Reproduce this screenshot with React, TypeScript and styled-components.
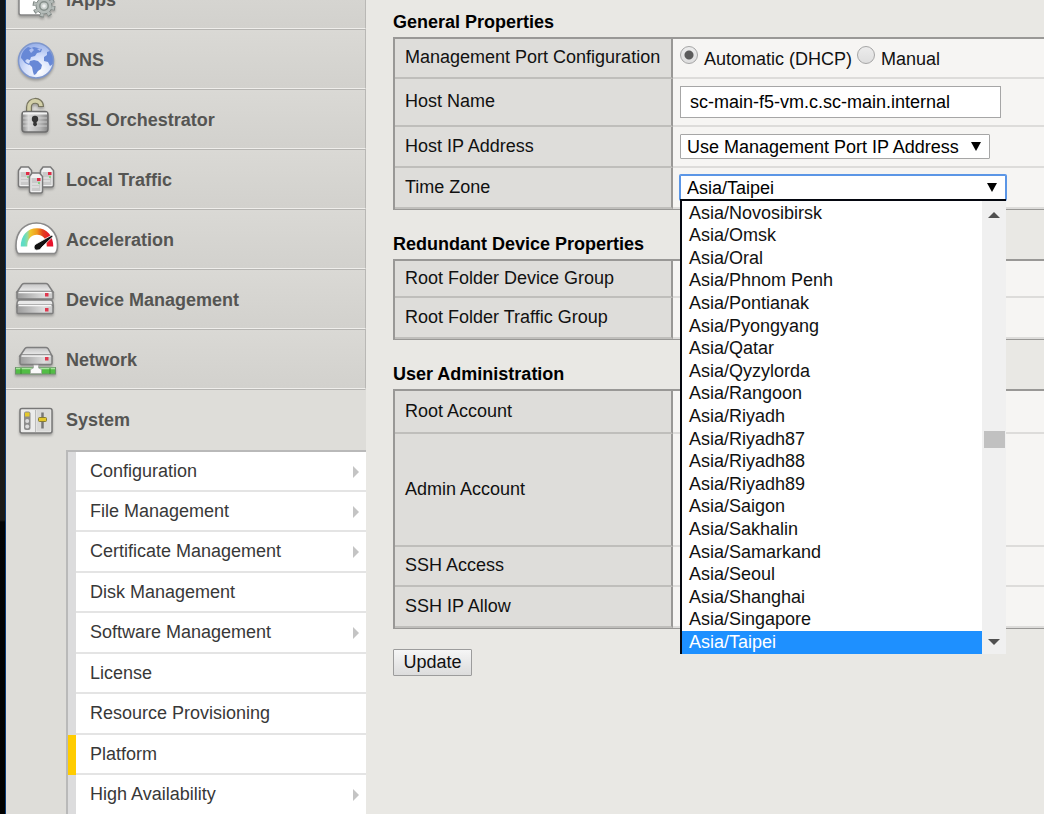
import React from "react";
import styled, { createGlobalStyle } from "styled-components";

const GlobalStyle = createGlobalStyle`
  * { box-sizing: border-box; }
  body {
    margin: 0;
    background: #e9e8e4;
    font-family: "Liberation Sans", Arial, sans-serif;
    font-size: 18px;
    line-height: 22px;
    color: #111;
  }
`;

const Shell = styled.div`
  display: flex;
  height: 100vh;
  overflow: hidden;
`;

const DesktopEdge = styled.div`
  flex: none;
  width: 6px;
  border-right: 1px solid #0b3c78;
  background: linear-gradient(#10151a 0, #14181b 200px, #1c1a18 520px, #020305 522px, #000 100%);
`;

const Sidebar = styled.nav`
  flex: none;
  width: 360px;
  margin-top: -31px;
  background: #deddd9;
`;

const ModuleLink = styled.a<{ $open?: boolean }>`
  display: flex;
  align-items: center;
  gap: 8px;
  height: 60px;
  padding-left: 8px;
  border-top: 1px solid #b7b6b3;
  border-bottom: 1px solid ${(p) => (p.$open ? "#deddd9" : "#efeeeb")};
  border-right: 1px solid ${(p) => (p.$open ? "transparent" : "#b9b8b5")};
  background: ${(p) => (p.$open ? "#deddd9" : "linear-gradient(#dad9d5, #d2d1cd)")};
  color: #555553;
  font-weight: bold;
  text-decoration: none;
`;

const ModuleName = styled.span`
  padding-top: 2px;
`;

const IconArt = styled.svg`
  flex: none;
  width: 44px;
  height: 44px;
  overflow: visible;
  filter: drop-shadow(0 2px 1px rgba(0, 0, 0, 0.25));
`;

const SubMenu = styled.ul`
  display: grid;
  grid-template-rows: 40px;
  grid-auto-rows: 40px 41px;
  margin: 1px 0 0 60px;
  padding: 0;
  list-style: none;
  border-top: 2px solid #b9b9b9;
  border-left: 2px solid #b9b9b9;
`;

const SubLink = styled.a<{ $current?: boolean }>`
  display: flex;
  align-items: center;
  justify-content: space-between;
  height: 100%;
  padding: 0 6px 3px 14px;
  border-left: 8px solid ${(p) => (p.$current ? "#fc0" : "#dcdcdd")};
  background: linear-gradient(#e4e4e4, #e4e4e4) left bottom / 100% 2px no-repeat #fff;
  color: #383838;
  text-decoration: none;
`;

const Chevron = styled.svg`
  width: 8px;
  height: 12px;
  margin-top: 2px;
`;

const Main = styled.main`
  flex: 1;
  min-width: 0;
  padding: 7px 0 0 27px;
`;

const Properties = styled.table`
  width: 100%;
  margin-bottom: 19px;
  border-spacing: 0;
  border-top: 2px solid #999896;
  border-left: 2px solid #999896;
  border-bottom: 1px solid #999896;
`;

const Caption = styled.caption`
  height: 30px;
  line-height: 30px;
  text-align: left;
  font-weight: bold;
  color: #000;
`;

const Row = styled.tr<{ $height: number }>`
  height: ${(p) => p.$height}px;
`;

const Label = styled.th`
  width: 278px;
  padding: 0 0 2px 10px;
  border-right: 2px solid #999896;
  border-bottom: 2px solid #bfbebb;
  background: #dedddA;
  font-weight: normal;
  text-align: left;
  white-space: nowrap;
`;

const Value = styled.td`
  padding: 0 0 0 7px;
  border-bottom: 2px solid #dddcda;
  background: #f6f5f3;
`;

const RadioGroup = styled.div`
  display: flex;
  gap: 5px;
`;

const RadioLabel = styled.label`
  display: flex;
  gap: 6px;
  align-items: flex-end;
`;

const Radio = styled.input`
  appearance: none;
  width: 18px;
  height: 18px;
  margin: 0 0 6px;
  border: 1px solid #a5a5a5;
  border-radius: 50%;
  background: linear-gradient(#ececec, #dedede);
  &:checked {
    background: radial-gradient(circle, #5b5b5b 4px, transparent 5px), linear-gradient(#ececec, #dedede);
  }
`;

const TextInput = styled.input`
  display: block;
  width: 321px;
  height: 32px;
  padding: 0 9px;
  border: 1px solid #a6a6a6;
  background: #fff;
  color: #000;
  font: inherit;
`;

const SelectBox = styled.div<{ $width: number }>`
  position: relative;
  width: ${(p) => p.$width}px;
`;

const Select = styled.select<{ $focused?: boolean }>`
  display: block;
  appearance: none;
  width: 100%;
  height: 25px;
  padding: 0 6px;
  border: 1px solid ${(p) => (p.$focused ? "#5b96e6" : "#a6a6a6")};
  border-radius: 1px;
  outline: none;
  box-shadow: ${(p) => (p.$focused ? "0 0 0 1px #5b96e6" : "none")};
  background: #fff;
  color: #000;
  font: inherit;
`;

const SelectArrow = styled.svg`
  position: absolute;
  top: 8px;
  right: 9px;
  width: 10px;
  height: 9px;
  pointer-events: none;
`;

const Popup = styled.div`
  position: absolute;
  z-index: 2;
  top: 24px;
  left: 0;
  right: 0;
  display: flex;
  border-top: 2px solid #04070f;
  border-left: 2px solid #04070f;
  background: #fff;
`;

const Options = styled.ul`
  flex: 1;
  display: grid;
  grid-auto-rows: 22px 23px 22px 23px 23px;
  margin: 0;
  padding: 1px 0 0;
  list-style: none;
`;

const Option = styled.li<{ $selected: boolean }>`
  padding-left: 7px;
  background: ${(p) => (p.$selected ? "#1e90ff" : "#fff")};
  color: ${(p) => (p.$selected ? "#fff" : "#111")};
`;

const ScrollTrack = styled.div`
  display: flex;
  flex-direction: column;
  align-items: center;
  width: 24px;
  padding: 11px 0 9px;
  background: #f0f0f0;
`;

const ScrollArrow = styled.svg`
  width: 12px;
  height: 6px;
`;

const ScrollThumb = styled.div`
  width: 21px;
  height: 17px;
  margin: 213px 0 auto;
  background: #c1c1c1;
`;

const UpdateButton = styled.button`
  display: block;
  width: 79px;
  height: 27px;
  margin-top: 20px;
  padding: 0 0 2px;
  border: 1px solid #9c9c9c;
  border-radius: 1px;
  background: linear-gradient(#f6f6f6, #dcdcdc);
  color: #111;
  font: inherit;
`;

const Gradients = () => (
  <svg width="0" height="0" style={{ position: "absolute" }} aria-hidden="true">
    <defs>
      <linearGradient id="front" x1="0" y1="0" x2="1" y2="0">
        <stop offset="0" stopColor="#9c9c9c" />
        <stop offset="0.75" stopColor="#dcdcdc" />
        <stop offset="1" stopColor="#c8c8c8" />
      </linearGradient>
      <linearGradient id="lid" x1="0" y1="0" x2="0" y2="1">
        <stop offset="0" stopColor="#c4c4c4" />
        <stop offset="1" stopColor="#f0f0f0" />
      </linearGradient>
      <linearGradient id="lockBody" x1="0" y1="0" x2="1" y2="0">
        <stop offset="0" stopColor="#878787" />
        <stop offset="0.25" stopColor="#d8d8d8" />
        <stop offset="0.7" stopColor="#b5b5b5" />
        <stop offset="1" stopColor="#858585" />
      </linearGradient>
      <radialGradient id="ocean" cx="0.6" cy="0.8" r="0.85">
        <stop offset="0" stopColor="#ffffff" />
        <stop offset="0.5" stopColor="#d3defa" />
        <stop offset="1" stopColor="#8fa9e6" />
      </radialGradient>
      <linearGradient id="dial" x1="0" y1="0" x2="1" y2="0">
        <stop offset="0" stopColor="#5fdcc6" />
        <stop offset="0.13" stopColor="#8fdda0" />
        <stop offset="0.25" stopColor="#efc52c" />
        <stop offset="0.5" stopColor="#f09a1c" />
        <stop offset="0.72" stopColor="#e2401c" />
        <stop offset="1" stopColor="#e8112b" />
      </linearGradient>
    </defs>
  </svg>
);

const GearIcon = () => (
  <IconArt viewBox="0 0 44 44">
    <path d="M5 12h22v26H7a2 2 0 0 1-2-2Z" fill="#fff" stroke="#858585" strokeWidth="1.5" />
    <circle cx="30" cy="29" r="9.5" fill="none" stroke="#7f8784" strokeWidth="4" strokeDasharray="4 3.46" />
    <circle cx="30" cy="29" r="8" fill="#b4bbb8" stroke="#7f8784" />
    <circle cx="30" cy="29" r="9" fill="none" stroke="#b4bbb8" strokeWidth="3" strokeDasharray="3 4.07" strokeDashoffset="-0.4" />
    <circle cx="30" cy="29" r="4.2" fill="#c9cfcc" stroke="#858e8a" strokeWidth="1.5" />
    <circle cx="30" cy="29" r="1.8" fill="#eef0ef" />
  </IconArt>
);

const GlobeIcon = () => (
  <IconArt viewBox="0 0 44 44">
    <circle cx="22" cy="23.500" r="17.500" fill="url(#ocean)" />
    <path d="M7 21c0-4 3-9 7-11l3 1 3-1 4 1 4 1-1 3-4 1-2 3-4 1-1 3-3-1-2 2 2 2 3 1-1 1-4-2-3-4Z" fill="#6788d6" />
    <path d="m16 24 4-1 4 1 4 4-1 4-3 2-2 3-2 1-1-3-1-5-3-3Z" fill="#6788d6" />
    <path d="m33 15 3-1 3 5v8l-3 2-2-4-4-1v-4l3-2Z" fill="#6788d6" />
    <path d="m15 13 3-2 2 2-3 3Zm8-1 4-1-1 3Z" fill="#aebff0" />
    <circle cx="22" cy="23.500" r="17.500" fill="none" stroke="#7f97cc" strokeWidth="1.500" />
  </IconArt>
);

const LockIcon = () => (
  <IconArt viewBox="0 0 44 44">
    <path d="M15 15V10c0-8 12-8 12-1v1" fill="none" stroke="#77755f" strokeWidth="6" />
    <path d="M15 15V10c0-8 12-8 12-1v0" fill="none" stroke="#d3d0a8" strokeWidth="3.6" />
    <rect x="8" y="14.5" width="26" height="20.5" rx="3" fill="url(#lockBody)" stroke="#6d6d6d" strokeWidth="1.4" />
    <path d="M9 16.5h24" stroke="#f1f1f1" strokeWidth="2" />
    <path d="M9 21h24M9 25h24M9 29h24" stroke="#dedede" opacity=".7" />
    <circle cx="21" cy="22" r="3.2" fill="#353535" />
    <path d="m19.6 23-.5 5 1.9 1.5L23 28l-.7-5Z" fill="#353535" />
  </IconArt>
);

const Tower = ({ x, y }: { x: number; y: number }) => (
  <g transform={`translate(${x} ${y})`}>
    <path d="M.5 4.500 3 1h7.500L13.500 4.500V19a2 2 0 0 1-2 2h-9a2 2 0 0 1-2-2Z" fill="#f1f1f1" stroke="#797979" strokeWidth="1.500" />
    <path d="M2.500 6h9v13h-9z" fill="#c9c9c9" />
    <path d="M3 12h7M3 15h7" stroke="#eee" />
    <rect x="8" y="6" width="3.500" height="3" fill="#df2c46" />
    <rect x="9" y="10" width="2" height="2" fill="#89cf88" />
  </g>
);

const ServersIcon = () => (
  <IconArt viewBox="0 0 44 44">
    <Tower x={4} y={9} />
    <Tower x={26} y={9} />
    <Tower x={15} y={15} />
  </IconArt>
);

const GaugeIcon = () => (
  <IconArt viewBox="0 0 44 44">
    <path d="M4.500 36.500c-2-1-2.500-5-2.500-8C2 14 11 6 22.500 6S43.500 15 43.500 28c0 3-.5 7.500-3 8.500Z" fill="#fff" stroke="#8a8a8a" strokeWidth="1.600" />
    <path d="M10 29.500c0-9 5-15 13-15s13 6 13 15" fill="none" stroke="url(#dial)" strokeWidth="6.500" />
    <path d="M38 18 22 27c-3.500 2-2 7 2 6 2 0 3-1.500 4-3l11-10.500Z" fill="#111" stroke="#fff" strokeWidth=".8" />
  </IconArt>
);

const DriveIcon = () => (
  <IconArt viewBox="0 0 44 44">
    {[0, 15].map((y) => (
      <g key={y} transform={`translate(0 ${y})`}>
        {y === 0 ? (
          <path d="M3 15 8 7.500q1-1 2-1h22q1 0 2 1L39 15Z" fill="url(#lid)" stroke="#7e7e7e" strokeWidth="1.500" />
        ) : (
          <path d="M3 12q0-4 3-4h30q3 0 3 4v3H3Z" fill="#e8e8e8" stroke="#7e7e7e" strokeWidth="1.500" />
        )}
        <rect x="3" y={y === 0 ? 14.5 : 13} width="36" height={y === 0 ? 7.5 : 8.5} rx="1" fill="url(#front)" stroke="#7e7e7e" strokeWidth="1.500" />
        <path d={y === 0 ? "M4.500 15.500h33" : "M4.500 13.500h33"} stroke="#f7f7f7" strokeWidth="1.500" />
        <rect x="31" y="16" width="3.500" height="3.500" fill="#df3950" />
      </g>
    ))}
  </IconArt>
);

const NetworkIcon = () => (
  <IconArt viewBox="0 0 44 44">
    <path d="m6 19 5-7.500q1-1 2-1h19q1 0 2 1l4 7.500Z" fill="url(#lid)" stroke="#7e7e7e" strokeWidth="1.500" />
    <rect x="6" y="18" width="32" height="9.500" rx="1.500" fill="url(#front)" stroke="#7e7e7e" strokeWidth="1.500" />
    <path d="M7.500 19h29" stroke="#f7f7f7" strokeWidth="1.500" />
    <rect x="31" y="20" width="3.500" height="3.500" fill="#df3950" />
    <rect x="1.500" y="30.500" width="40" height="6.500" fill="#52bd45" stroke="#6c926a" strokeWidth="1" />
    <path d="M2 31.500h39" stroke="#a9e49f" strokeWidth="1.500" />
    <path d="M7 31v6M36 31v6" stroke="#348f2b" strokeWidth="1" />
    <path d="M16.500 36.500v-4l3-1.500v-3h5v3l3 1.500v4Z" fill="#fafafa" stroke="#a7a7a7" strokeWidth=".8" />
  </IconArt>
);

const SystemIcon = () => (
  <IconArt viewBox="0 0 44 44">
    <rect x="6" y="11.500" width="32" height="24.500" rx="2" fill="#ececeb" stroke="#777" strokeWidth="1.500" />
    <path d="M21.500 13v22" stroke="#bbb" />
    <rect x="22.500" y="13" width="14" height="21.500" fill="#d9d9d8" />
    <rect x="10" y="14.500" width="6.500" height="18.500" rx="2" fill="#8c8c8c" />
    <rect x="11" y="15.500" width="4.500" height="4" fill="#e5c92c" />
    <circle cx="13.200" cy="24" r="2" fill="#ddd" />
    <circle cx="13.200" cy="29.500" r="2" fill="#ddd" />
    <path d="M28.500 15.500v16" stroke="#777" strokeWidth="2.500" />
    <rect x="24.500" y="20.500" width="8" height="4" rx="1" fill="#e3c72b" stroke="#857a35" />
  </IconArt>
);

const modules = [
  { name: "iApps", Icon: GearIcon },
  { name: "DNS", Icon: GlobeIcon },
  { name: "SSL Orchestrator", Icon: LockIcon },
  { name: "Local Traffic", Icon: ServersIcon },
  { name: "Acceleration", Icon: GaugeIcon },
  { name: "Device Management", Icon: DriveIcon },
  { name: "Network", Icon: NetworkIcon },
  { name: "System", Icon: SystemIcon, open: true },
];

const systemPages = [
  { name: "Configuration", more: true },
  { name: "File Management", more: true },
  { name: "Certificate Management", more: true },
  { name: "Disk Management" },
  { name: "Software Management", more: true },
  { name: "License" },
  { name: "Resource Provisioning" },
  { name: "Platform", current: true },
  { name: "High Availability", more: true },
];

const zones = [
  "Novosibirsk", "Omsk", "Oral", "Phnom Penh", "Pontianak", "Pyongyang", "Qatar",
  "Qyzylorda", "Rangoon", "Riyadh", "Riyadh87", "Riyadh88", "Riyadh89", "Saigon",
  "Sakhalin", "Samarkand", "Seoul", "Shanghai", "Singapore", "Taipei",
].map((city) => `Asia/${city}`);

const DownArrow = () => (
  <SelectArrow viewBox="0 0 10 9" aria-hidden="true">
    <path d="M0 0h10L5 9Z" fill="#000" />
  </SelectArrow>
);

const EmptyRow = ({ label, height }: { label: string; height: number }) => (
  <Row $height={height}>
    <Label scope="row">{label}</Label>
    <Value />
  </Row>
);

export default function App() {
  return (
    <Shell>
      <GlobalStyle />
      <Gradients />
      <DesktopEdge />
      <Sidebar>
        {modules.map(({ name, Icon, open }) => (
          <ModuleLink key={name} href="#" $open={open}>
            <Icon />
            <ModuleName>{name}</ModuleName>
          </ModuleLink>
        ))}
        <SubMenu>
          {systemPages.map((page) => (
            <li key={page.name}>
              <SubLink href="#" $current={page.current}>
                {page.name}
                {page.more && (
                  <Chevron viewBox="0 0 8 12" aria-hidden="true">
                    <path d="M1 0v12l6-6Z" fill="#c4c4c4" />
                  </Chevron>
                )}
              </SubLink>
            </li>
          ))}
        </SubMenu>
      </Sidebar>
      <Main>
        <Properties>
          <Caption>General Properties</Caption>
          <tbody>
            <Row $height={40}>
              <Label scope="row">Management Port Configuration</Label>
              <Value>
                <RadioGroup>
                  <RadioLabel>
                    <Radio type="radio" name="port" defaultChecked />
                    Automatic (DHCP)
                  </RadioLabel>
                  <RadioLabel>
                    <Radio type="radio" name="port" />
                    Manual
                  </RadioLabel>
                </RadioGroup>
              </Value>
            </Row>
            <Row $height={48}>
              <Label scope="row">
                <label htmlFor="host-name">Host Name</label>
              </Label>
              <Value>
                <TextInput id="host-name" type="text" defaultValue="sc-main-f5-vm.c.sc-main.internal" />
              </Value>
            </Row>
            <Row $height={41}>
              <Label scope="row">
                <label htmlFor="host-ip">Host IP Address</label>
              </Label>
              <Value>
                <SelectBox $width={310}>
                  <Select id="host-ip">
                    <option>Use Management Port IP Address</option>
                  </Select>
                  <DownArrow />
                </SelectBox>
              </Value>
            </Row>
            <Row $height={41}>
              <Label scope="row">
                <label htmlFor="time-zone">Time Zone</label>
              </Label>
              <Value>
                <SelectBox $width={326}>
                  <Select id="time-zone" $focused defaultValue="Asia/Taipei">
                    {zones.map((zone) => (
                      <option key={zone}>{zone}</option>
                    ))}
                  </Select>
                  <DownArrow />
                  <Popup>
                    <Options role="listbox" aria-label="Time Zone">
                      {zones.map((zone) => (
                        <Option
                          key={zone}
                          role="option"
                          aria-selected={zone === "Asia/Taipei"}
                          $selected={zone === "Asia/Taipei"}
                        >
                          {zone}
                        </Option>
                      ))}
                    </Options>
                    <ScrollTrack>
                      <ScrollArrow viewBox="0 0 12 6">
                        <path d="M0 6 6 0l6 6Z" fill="#505050" />
                      </ScrollArrow>
                      <ScrollThumb />
                      <ScrollArrow viewBox="0 0 12 6">
                        <path d="M0 0h12L6 6Z" fill="#505050" />
                      </ScrollArrow>
                    </ScrollTrack>
                  </Popup>
                </SelectBox>
              </Value>
            </Row>
          </tbody>
        </Properties>
        <Properties>
          <Caption>Redundant Device Properties</Caption>
          <tbody>
            <EmptyRow label="Root Folder Device Group" height={37} />
            <EmptyRow label="Root Folder Traffic Group" height={41} />
          </tbody>
        </Properties>
        <Properties>
          <Caption>User Administration</Caption>
          <tbody>
            <EmptyRow label="Root Account" height={43} />
            <EmptyRow label="Admin Account" height={113} />
            <EmptyRow label="SSH Access" height={40} />
            <EmptyRow label="SSH IP Allow" height={41} />
          </tbody>
        </Properties>
        <UpdateButton type="button">Update</UpdateButton>
      </Main>
    </Shell>
  );
}
